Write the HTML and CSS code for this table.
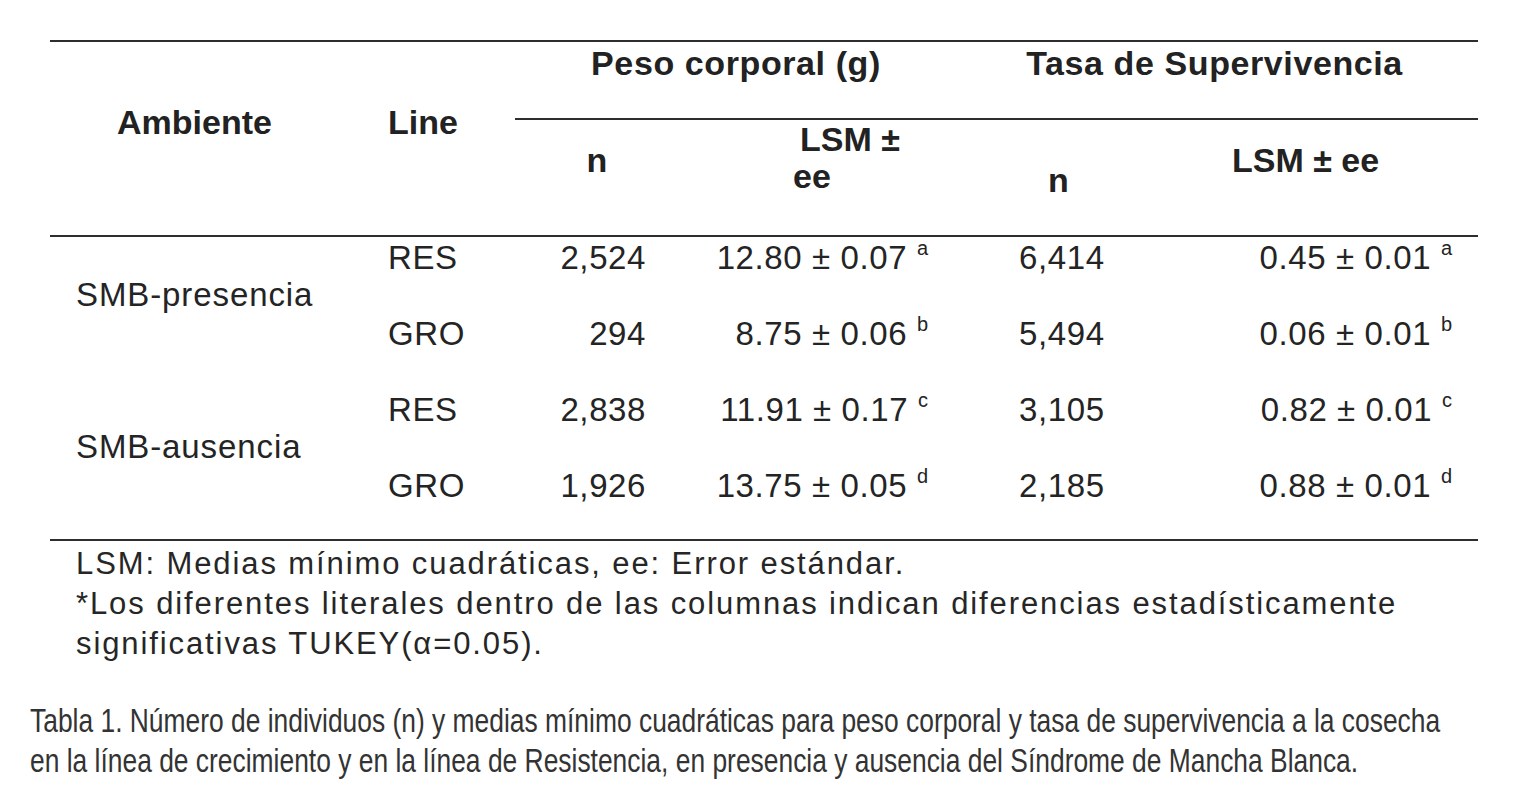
FILE: index.html
```html
<!DOCTYPE html>
<html lang="es">
<head>
<meta charset="utf-8">
<title>Tabla 1</title>
<link rel="stylesheet" href="styles.css">
</head>
<body>
<div class="page">
  <table class="data">
    <colgroup>
      <col class="c1"><col class="c2"><col class="c3"><col class="c4"><col class="c5"><col class="c6">
    </colgroup>
    <thead>
      <tr class="h1">
        <th rowspan="2" class="th-amb">Ambiente</th>
        <th rowspan="2" class="th-line">Line</th>
        <th colspan="2" class="th-group">Peso corporal (g)</th>
        <th colspan="2" class="th-group">Tasa de Supervivencia</th>
      </tr>
      <tr class="h2">
        <th class="th-n1">n</th>
        <th class="th-lsm1"><div class="l1">LSM ±</div><div class="l2">ee</div></th>
        <th class="th-n2">n</th>
        <th class="th-lsm2">LSM ± ee</th>
      </tr>
    </thead>
    <tbody>
      <tr>
        <td rowspan="2" class="amb">SMB-presencia</td>
        <td class="line">RES</td>
        <td class="num">2,524</td>
        <td class="lsm">12.80 ± 0.07 <sup class="sup">a</sup></td>
        <td class="n2">6,414</td>
        <td class="lsm2">0.45 ± 0.01 <sup class="sup">a</sup></td>
      </tr>
      <tr>
        <td class="line">GRO</td>
        <td class="num">294</td>
        <td class="lsm">8.75 ± 0.06 <sup class="sup">b</sup></td>
        <td class="n2">5,494</td>
        <td class="lsm2">0.06 ± 0.01 <sup class="sup">b</sup></td>
      </tr>
      <tr>
        <td rowspan="2" class="amb last">SMB-ausencia</td>
        <td class="line">RES</td>
        <td class="num">2,838</td>
        <td class="lsm">11.91 ± 0.17 <sup class="sup">c</sup></td>
        <td class="n2">3,105</td>
        <td class="lsm2">0.82 ± 0.01 <sup class="sup">c</sup></td>
      </tr>
      <tr class="lastrow">
        <td class="line">GRO</td>
        <td class="num">1,926</td>
        <td class="lsm">13.75 ± 0.05 <sup class="sup">d</sup></td>
        <td class="n2">2,185</td>
        <td class="lsm2">0.88 ± 0.01 <sup class="sup">d</sup></td>
      </tr>
    </tbody>
  </table>

  <div class="notes">
    <div class="note">LSM: Medias mínimo cuadráticas, ee: Error estándar.</div>
    <div class="note">*Los diferentes literales dentro de las columnas indican diferencias estadísticamente</div>
    <div class="note">significativas TUKEY(α=0.05).</div>
  </div>

  <div class="caption">
    <span class="cap-line">Tabla 1. Número de individuos (n) y medias mínimo cuadráticas para peso corporal y tasa de supervivencia a la cosecha</span>
    <span class="cap-line">en la línea de crecimiento y en la línea de Resistencia, en presencia y ausencia del Síndrome de Mancha Blanca.</span>
  </div>
</div>
</body>
</html>
```
FILE: styles.css
```css
html, body {
  margin: 0;
  padding: 0;
  background: #ffffff;
}

body {
  font-family: "Liberation Sans", Arial, sans-serif;
  color: #242424;
  width: 1535px;
  height: 801px;
  overflow: hidden;
}

.page {
  padding-top: 40px;
}

.data {
  margin-left: 50px;
  width: 1428px;
  table-layout: fixed;
  border-collapse: separate;
  border-spacing: 0;
}

.c1 { width: 311px; }
.c2 { width: 154px; }
.c3 { width: 158px; }
.c4 { width: 284px; }
.c5 { width: 188px; }
.c6 { width: 333px; }

.data th,
.data td {
  padding: 0;
  vertical-align: top;
  line-height: 40px;
  white-space: nowrap;
  text-align: left;
}

.data th {
  font-weight: bold;
  font-size: 34px;
  color: #222222;
}

/* header row 1 */
.h1 th {
  border-top: 2px solid #2e2e2e;
}
.h1 { height: 80px; }
.h2 { height: 117px; }

.th-amb {
  padding-top: 60px !important;
  padding-left: 67px !important;
  border-bottom: 2px solid #2e2e2e;
}
.th-line {
  padding-top: 60px !important;
  padding-left: 27px !important;
  border-bottom: 2px solid #2e2e2e;
}
.th-group {
  text-align: center !important;
  padding-top: 1px !important;
  border-bottom: 2px solid #2e2e2e;
  letter-spacing: 0.6px;
}
.th-group + .th-group {
  padding-right: 6px !important;
}

.h2 th {
  border-bottom: 2px solid #2e2e2e;
}
.th-n1 {
  text-align: center !important;
  padding-top: 20px !important;
  padding-left: 6px !important;
}
.th-lsm1 {
  padding-top: 1px !important;
  line-height: 37px !important;
}
.th-lsm1 .l1 { padding-left: 127px; }
.th-lsm1 .l2 { padding-left: 120px; }
.th-n2 {
  padding-top: 40px !important;
  padding-left: 91px !important;
}
.th-lsm2 {
  padding-top: 20px !important;
  padding-left: 87px !important;
}

/* body */
.data tbody tr { height: 76px; }

.data td {
  font-size: 33px;
  letter-spacing: 0.6px;
  padding-top: 1px;
}

.data td.amb {
  padding-top: 38px;
  padding-left: 26px;
  letter-spacing: 0.9px;
}
.data td.amb.last {
  border-bottom: 2px solid #2e2e2e;
}
.lastrow td {
  border-bottom: 2px solid #2e2e2e;
}

.data td.line { padding-left: 27px; }
.data td.num { text-align: right; padding-right: 27px; }
.data td.lsm { text-align: right; padding-right: 29px; }
.data td.n2 { padding-left: 62px; }
.data td.lsm2 { text-align: right; padding-right: 26px; }

.sup {
  font-size: 20px;
  line-height: 0;
  vertical-align: 14px;
  letter-spacing: 0;
}

/* notes */
.notes {
  margin-top: 3px;
  padding-left: 76px;
}
.note {
  font-size: 31px;
  letter-spacing: 1.9px;
  line-height: 40px;
  white-space: nowrap;
  color: #262626;
}

/* caption */
.caption {
  margin-top: 37px;
  padding-left: 30px;
  color: #333333;
}
.cap-line {
  display: block;
  font-size: 33px;
  line-height: 40px;
  white-space: nowrap;
  transform: scaleX(0.8);
  transform-origin: left center;
}
```
